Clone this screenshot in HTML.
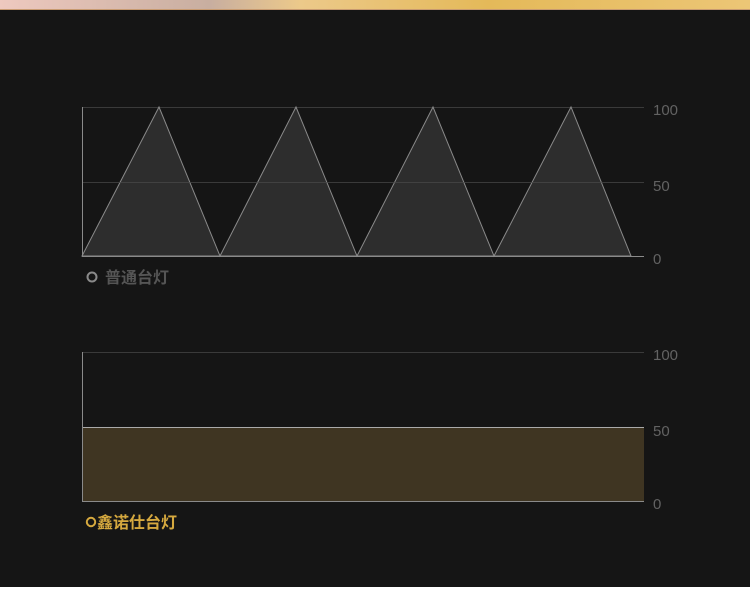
<!DOCTYPE html>
<html><head><meta charset="utf-8"><style>
html,body{margin:0;padding:0;width:750px;height:594px;overflow:hidden;background:#fff}
</style></head><body>
<svg width="750" height="594" xmlns="http://www.w3.org/2000/svg" style="display:block">
<defs>
<linearGradient id="top" x1="0" x2="1">
<stop offset="0" stop-color="#eec9bf"/><stop offset="0.28" stop-color="#c8aea0"/><stop offset="0.4" stop-color="#ecc98a"/><stop offset="0.65" stop-color="#e4b959"/><stop offset="1" stop-color="#ecc676"/>
</linearGradient>
</defs>
<rect x="0" y="0" width="750" height="587" fill="#151515"/>
<rect x="0" y="0" width="750" height="9" fill="url(#top)"/>
<rect x="0" y="9" width="750" height="1" fill="#c89a70"/>
<g font-family="Liberation Sans, Noto Sans CJK SC, sans-serif">
<line x1="82" y1="107.5" x2="644" y2="107.5" stroke="#3a3a3a"/>
<polygon points="82,256 159,107 220,256 296,107 357,256 433,107 494,256 571,107 631,256" fill="#2d2d2d" stroke="#8a8a8a" stroke-width="1"/>
<line x1="82" y1="182.5" x2="644" y2="182.5" stroke="#4a4a4a" stroke-opacity="0.7"/>
<line x1="82.5" y1="107" x2="82.5" y2="256" stroke="#8a8a8a"/>
<line x1="82" y1="256.5" x2="644" y2="256.5" stroke="#8a8a8a"/>
<g fill="#626262" font-size="15">
<text x="653" y="115">100</text><text x="653" y="191">50</text><text x="653" y="264">0</text>
</g>
<circle cx="92" cy="277" r="4.5" fill="none" stroke="#8a8a8a" stroke-width="2"/>
<text x="105" y="283" fill="#555" font-size="16" font-weight="bold">普通台灯</text>
<line x1="82" y1="352.5" x2="644" y2="352.5" stroke="#3a3a3a"/>
<rect x="82" y="427" width="562" height="74" fill="#3f3522"/>
<line x1="82" y1="427.5" x2="644" y2="427.5" stroke="#aaa"/>
<line x1="82.5" y1="352" x2="82.5" y2="501" stroke="#8a8a8a"/>
<line x1="82" y1="501.5" x2="644" y2="501.5" stroke="#8a8a8a"/>
<g fill="#626262" font-size="15">
<text x="653" y="360">100</text><text x="653" y="436">50</text><text x="653" y="509">0</text>
</g>
<circle cx="91" cy="522" r="4.2" fill="none" stroke="#d6a93f" stroke-width="2"/>
<text x="97" y="528" fill="#d6a93f" font-size="16" font-weight="bold">鑫诺仕台灯</text>
</g>
<rect x="0" y="587" width="750" height="7" fill="#fff"/>
</svg>
</body></html>
